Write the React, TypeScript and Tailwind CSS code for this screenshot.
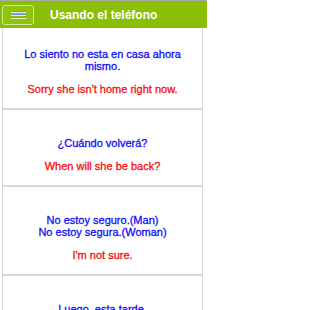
const phrases = [
  { es: ['Lo siento no esta en casa ahora', 'mismo.'], en: "Sorry she isn't home right now." },
  { es: ['¿Cuándo volverá?'], en: 'When will she be back?' },
  { es: ['No estoy seguro.(Man)', 'No estoy segura.(Woman)'], en: "I'm not sure." },
  { es: ['Luego, esta tarde.'], en: 'Later, this afternoon.' },
];

const App = () => {
  return (
    <div className="relative h-[310px] w-[207px] overflow-hidden bg-white font-['Liberation_Sans',Arial,sans-serif]">
      <header className="absolute inset-x-0 top-0 z-10 flex h-[28px] items-center border-t border-[#a9ab9f] bg-[#8bbf06]">
        <button className="ml-[2px] flex h-[20px] w-[32px] flex-col items-center justify-center gap-[1px] rounded-[3px] border border-[#cfe79a] bg-[#8fc30c]">
          <span className="h-[2px] w-[15px] border-t border-[#5b9bd8] bg-[#f3ead0]" />
          <span className="h-[2px] w-[15px] border-t border-[#5b9bd8] bg-[#f3ead0]" />
          <span className="h-[2px] w-[15px] border-t border-[#5b9bd8] bg-[#f3ead0]" />
        </button>
        <h1 className="ml-[16px] text-[12px] font-bold text-white">Usando el teléfono</h1>
      </header>

      <div className="pt-[20px]">
        {phrases.map((p) => (
          <div
            key={p.en}
            className="ml-[2px] mr-[4px] border border-[#d8d8d8] px-2 pb-[13px] pt-[27px] text-center text-[11px] leading-[12px] [-webkit-text-stroke:0.3px_currentColor]"
          >
            <p className="text-[#1010f5]">
              {p.es.map((line) => (
                <span key={line} className="block">
                  {line}
                </span>
              ))}
            </p>
            <p className="mt-[11px] text-[#f51010]">{p.en}</p>
          </div>
        ))}
      </div>
    </div>
  );
};

export default App;
